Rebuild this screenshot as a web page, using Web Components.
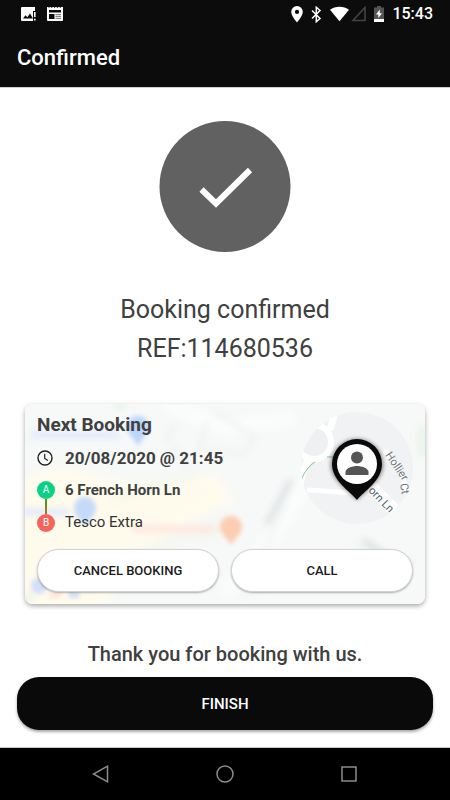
<!DOCTYPE html>
<html lang="en">
<head>
<meta charset="utf-8">
<meta name="viewport" content="width=device-width, initial-scale=1">
<title>Confirmed</title>
<style>
  body { margin: 0; font-family: Roboto, "Liberation Sans", sans-serif; color: #404040; background: #fff; }
</style>
</head>
<body>
<booking-screen></booking-screen>

<template id="t-screen">
  <style>
    :host { display: flex; flex-direction: column; min-height: 100vh; }
    main { flex: 1; display: flex; flex-direction: column; padding: 33px 17px 17px; border-top: 1px solid #cfcfcf; border-bottom: 1px solid #c4c8c6; }
    confirm-mark { align-self: center; }
    .ref { margin: 37px 0 0; font-size: 25px; line-height: 39px; text-align: center; font-weight: 400; }
    booking-card { margin: 36px 8px 0; }
    .thanks { margin: 38px 0 11px; font-size: 20px; line-height: 24px; font-weight: 500; text-align: center; }
  </style>
  <status-bar></status-bar>
  <title-bar>Confirmed</title-bar>
  <main>
    <confirm-mark></confirm-mark>
    <p class="ref">Booking confirmed<br>REF:114680536</p>
    <booking-card>
      <span slot="title">Next Booking</span>
      <span slot="date">20/08/2020 @ 21:45</span>
      <route-stops slot="route">
        <span slot="from">6 French Horn Ln</span>
        <span slot="to">Tesco Extra</span>
      </route-stops>
      <pill-button slot="actions">CANCEL BOOKING</pill-button>
      <pill-button slot="actions">CALL</pill-button>
    </booking-card>
    <p class="thanks">Thank you for booking with us.</p>
    <pill-button kind="primary">FINISH</pill-button>
  </main>
  <nav-bar></nav-bar>
</template>

<template id="t-status">
  <style>
    :host { display: flex; justify-content: space-between; align-items: center; height: 28px; padding: 0 17px 0 20px; background: #0c0c0c; color: #fff; font-size: 16px; font-weight: 500; line-height: 28px; }
    div { display: flex; align-items: center; }
    .left { gap: 10px; }
    .right { gap: 8px; }
    svg { display: block; }
  </style>
  <div class="left">
    <svg width="17" height="16" viewBox="0 0 17 16" aria-hidden="true">
      <path fill="#fff" d="M2 1h13v6h-1v8H2a1 1 0 0 1-1-1V2a1 1 0 0 1 1-1z"/>
      <path fill="#0c0c0c" d="M3 12.500l2.500-3.300 1.800 2 2.700-3.600 3 4.900z"/>
      <path fill="#0c0c0c" d="M13 5h3v11h-3z"/>
      <path fill="#fff" d="M14 6h1.600v5H14zM14 12.800h1.600v1.700H14z"/>
    </svg>
    <svg width="16" height="16" viewBox="0 0 16 16" aria-hidden="true">
      <path fill="#fff" d="M0 1h1.300l.7 1 .9-1h1l.9 1 .9-1h1l.9 1 .9-1h1l.9 1 .9-1h1l.9 1 .9-1H16v13a1 1 0 0 1-1 1H1a1 1 0 0 1-1-1z"/>
      <path fill="#0c0c0c" d="M2 4h12v2.500H2zM2 8h5.500v5H2z"/>
      <path fill="#888" d="M8.500 8H14v1.300H8.500zM8.500 10H14v1.200H8.500zM8.500 12H14v1H8.500z"/>
    </svg>
  </div>
  <div class="right">
    <svg width="12" height="17" viewBox="0 0 12 17" aria-hidden="true"><path fill="#fff" fill-rule="evenodd" d="M6 0a5.800 5.800 0 0 1 5.800 5.800C11.800 10 6 16.500 6 16.500S.2 10 .2 5.800A5.800 5.800 0 0 1 6 0zm0 3.800a2.100 2.100 0 1 0 0 4.200 2.100 2.100 0 0 0 0-4.200z"/></svg>
    <svg width="11" height="17" viewBox="0 0 11 17" aria-hidden="true"><path fill="none" stroke="#fff" stroke-width="1.500" d="M1 4.500l8 8-3.700 3.200V1.300L9 4.500l-8 8"/></svg>
    <div>
      <svg width="19" height="16" viewBox="0 0 19 16" aria-hidden="true"><path fill="#fff" d="M9.500 15.300L0 3.800C5-.4 14-.4 19 3.800z"/></svg>
      <svg width="17" height="16" viewBox="0 0 17 16" aria-hidden="true"><path fill="none" stroke="#444" stroke-width="1.600" d="M16 1.500v13H4z"/></svg>
    </div>
    <svg width="10" height="16" viewBox="0 0 10 16" aria-hidden="true">
      <path fill="#555" d="M3 0h4v1.500h3V16H0V1.500h3z"/>
      <path fill="#fff" d="M0 13h10v3H0zM5.800 3.500v3.700h2.300L4.300 12V8.500H2z"/>
    </svg>
    <span>15:43</span>
  </div>
</template>

<template id="t-title">
  <style>
    :host { display: block; background: #0c0c0c; color: #fff; padding: 0 17px; }
    h1 { margin: 0; font-size: 22px; line-height: 59px; font-weight: 500; }
  </style>
  <h1><slot></slot></h1>
</template>

<template id="t-mark">
  <style>
    :host { display: block; }
    svg { display: block; }
  </style>
  <svg width="132" height="132" viewBox="0 0 132 132" role="img" aria-label="Confirmed">
    <circle cx="66" cy="65.500" r="65.500" fill="#616161"/>
    <path d="M42.500 68.500L57 82.500 91 49" fill="none" stroke="#fff" stroke-width="6"/>
  </svg>
</template>

<template id="t-card">
  <style>
    :host { display: block; position: relative; border-radius: 8px; overflow: hidden; box-shadow: 0 2px 5px rgba(0,0,0,.35); color: #404040; }
    map-backdrop { position: absolute; inset: 0; }
    .body { position: relative; padding: 9px 12px 12px; }
    h2 { margin: 0 0 5px; font-size: 19px; line-height: 24px; font-weight: 700; }
    .date { display: flex; align-items: center; gap: 11px; height: 32px; font-size: 17px; font-weight: 700; line-height: 24px; }
    .date svg { display: block; }
    .actions { display: grid; grid-template-columns: 1fr 1fr; gap: 12px; margin-top: 11px; }
  </style>
  <map-backdrop></map-backdrop>
  <div class="body">
    <h2><slot name="title"></slot></h2>
    <div class="date">
      <svg width="17" height="16" viewBox="0 0 17 16" aria-hidden="true"><circle cx="8" cy="8" r="7" fill="none" stroke="#222" stroke-width="1.400"/><path d="M7.700 3.800v4.600l3.300 2" fill="none" stroke="#222" stroke-width="1.200"/></svg>
      <slot name="date"></slot>
    </div>
    <slot name="route"></slot>
    <div class="actions"><slot name="actions"></slot></div>
  </div>
</template>

<template id="t-route">
  <style>
    :host { display: flex; gap: 10px; line-height: 32px; font-size: 15px; }
    .marks { display: flex; flex-direction: column; align-items: center; padding: 7px 0 6px; }
    .dot { width: 18px; height: 18px; border-radius: 50%; color: #fff; font-size: 10px; line-height: 18px; text-align: center; }
    .a { background: #0bd088; }
    .b { background: #f4645a; }
    .line { flex: 1; width: 2px; background: linear-gradient(#4a9d12, #b0701c); }
    .from { font-weight: 700; }
    .to { color: #333; }
  </style>
  <div class="marks"><span class="dot a">A</span><span class="line"></span><span class="dot b">B</span></div>
  <div>
    <div class="from"><slot name="from"></slot></div>
    <div class="to"><slot name="to"></slot></div>
  </div>
</template>

<template id="t-pill">
  <style>
    :host { display: block; }
    button { display: block; width: 100%; height: 43px; padding: 0 12px; border: 1px solid #d2d2d2; border-radius: 22px; background: #fff; color: #1c1c1c; font: 500 13px Roboto, "Liberation Sans", sans-serif; box-shadow: 0 1px 2px rgba(0,0,0,.3); }
    :host([kind="primary"]) button { height: 53px; border: 0; background: #0a0a0a; color: #fff; font-size: 15px; box-shadow: 0 2px 3px rgba(0,0,0,.35); }
  </style>
  <button type="button"><slot></slot></button>
</template>

<template id="t-map">
  <style>
    :host { display: block; }
    svg { display: block; width: 100%; height: 100%; }
  </style>
  <svg viewBox="0 0 400 200" preserveAspectRatio="xMaxYMid slice" role="img" aria-label="Map of the pick-up point">
    <defs>
      <filter id="soft" x="-30%" y="-30%" width="160%" height="160%" color-interpolation-filters="sRGB"><feGaussianBlur stdDeviation="6"/></filter>
      <filter id="mid" filterUnits="userSpaceOnUse" x="-20" y="-20" width="440" height="240" color-interpolation-filters="sRGB"><feGaussianBlur stdDeviation="3"/></filter>
      <filter id="pins" filterUnits="userSpaceOnUse" x="-20" y="-20" width="440" height="240" color-interpolation-filters="sRGB"><feGaussianBlur stdDeviation="2"/></filter>
      <clipPath id="lens"><circle cx="332" cy="64" r="56"/></clipPath>
    </defs>
    <rect width="400" height="200" fill="#f7f9f8"/>
    <g filter="url(#soft)">
      <path fill="#fffbec" d="M-20 78l60-16 60 18 90-10 20 25-50 25-48 30-40 60H-20z"/>
      <path fill="none" stroke="#eff6ea" stroke-width="5" d="M85 96l90-26M55 185l60-38 95-27"/>
      <path fill="none" stroke="#fdfefe" stroke-width="10" d="M140 0l60 24 70-10M200 190l60-74 30-56"/>
    </g>
    <g filter="url(#mid)" fill="none">
      <path stroke="#edf1f1" stroke-width="3" d="M150 20l-8 14 20 28M190 8l40 26-12 16-44-6 8-26M220 190l40-90M330 140l60 18"/>
      <path stroke="#dfe2e5" stroke-width="6" d="M242 120l24-44M338 136l22 14"/>
      <path stroke="#e0eafa" stroke-width="7" d="M6 31h88M-2 108h46"/>
      <path stroke="#fde6de" stroke-width="7" d="M108 125h82"/>
      <path stroke="#e7f4e9" stroke-width="9" d="M398 22v30M90 0h10M0 194h8M230 182h10"/>
    </g>
    <g filter="url(#pins)">
      <path fill="#bcd5fb" d="M113 42c-4-8-11-12-11-19a11 11 0 0 1 22 0c0 7-7 11-11 19z"/>
      <path fill="#c5dafa" d="M60 122c-5-7-11-11-11-18a11 11 0 0 1 22 0c0 7-6 11-11 18z"/>
      <path fill="#fccdb2" d="M206 141c-5-8-11-12-11-18a11 11 0 0 1 22 0c0 6-6 10-11 18z"/>
      <circle cx="14" cy="182" r="8" fill="#d2dff9"/>
      <path stroke="#c6d8fa" stroke-width="5" d="M44 191h10"/>
      <path stroke="#fbdcd4" stroke-width="4" d="M24 191h12"/>
    </g>
    <g clip-path="url(#lens)">
      <rect x="270" y="0" width="130" height="130" fill="#f0f2f4"/>
      <path fill="none" stroke="#fff" stroke-width="7" d="M310 8l-5 18M274 86c2-15 6-25 12-35"/>
      <circle cx="289" cy="38" r="17" fill="#eef0f2" stroke="#fff" stroke-width="6"/>
      <path fill="none" stroke="#7cc592" stroke-width="1" d="M276 76c4-9 8-14 14-18M302 53h6"/>
      <path fill="none" stroke="#fff" stroke-width="5" stroke-linecap="round" d="M284 86l44 3"/>
      <path fill="none" stroke="#fff" stroke-width="12" d="M340 76l44 44"/>
      <path fill="none" stroke="#fff" stroke-width="5" stroke-linecap="round" d="M361 48c10 10 17 22 20 37"/>
    </g>
    <g font-family="Roboto, sans-serif" font-size="11" font-weight="400" fill="#71767b">
      <text transform="translate(360 51) rotate(56)">Hollier</text>
      <text transform="translate(375 80) rotate(80)">Ct</text>
      <text transform="translate(343 87) rotate(46)" fill="#4a626b" stroke="#fff" stroke-width="2" paint-order="stroke">orn Ln</text>
    </g>
    <path filter="url(#pins)" fill="#000" opacity=".5" d="M332 96c-8-9-26-20-26-35a26 26 0 0 1 52 0c0 15-18 26-26 35z"/>
    <path fill="#0a0a0a" d="M332 96c-7-9-25-19-25-36a25 25 0 0 1 50 0c0 17-18 27-25 36z"/>
    <circle cx="332" cy="60" r="20" fill="#fff"/>
    <circle cx="332" cy="53.500" r="6" fill="#555"/>
    <path fill="#555" d="M320.500 71v-3c0-4 7.500-6 11.500-6s11.500 2 11.500 6v3z"/>
  </svg>
</template>

<template id="t-nav">
  <style>
    :host { display: block; background: #000; }
    nav { display: grid; grid-template-columns: repeat(3, 124px); justify-content: center; height: 52px; }
    button { display: grid; place-items: center; padding: 0; border: 0; background: none; }
    svg { display: block; fill: none; stroke: #8c8c8c; stroke-width: 1.500; }
  </style>
  <nav aria-label="System">
    <button type="button" aria-label="Back"><svg width="18" height="18" viewBox="0 0 18 18"><path d="M15.500 1.200v15.600L1.500 9z"/></svg></button>
    <button type="button" aria-label="Home"><svg width="18" height="18" viewBox="0 0 18 18"><circle cx="9" cy="9" r="8"/></svg></button>
    <button type="button" aria-label="Recent apps"><svg width="18" height="18" viewBox="0 0 18 18"><rect x="2" y="2" width="14" height="14"/></svg></button>
  </nav>
</template>

<script>
  function cloneInto(host, id) {
    const root = host.attachShadow({ mode: 'open' });
    root.append(document.getElementById(id).content.cloneNode(true));
  }
  class StatusBar extends HTMLElement { constructor() { super(); cloneInto(this, 't-status'); } }
  class TitleBar extends HTMLElement { constructor() { super(); cloneInto(this, 't-title'); } }
  class ConfirmMark extends HTMLElement { constructor() { super(); cloneInto(this, 't-mark'); } }
  class MapBackdrop extends HTMLElement { constructor() { super(); cloneInto(this, 't-map'); } }
  class RouteStops extends HTMLElement { constructor() { super(); cloneInto(this, 't-route'); } }
  class PillButton extends HTMLElement { constructor() { super(); cloneInto(this, 't-pill'); } }
  class BookingCard extends HTMLElement { constructor() { super(); cloneInto(this, 't-card'); } }
  class NavBar extends HTMLElement { constructor() { super(); cloneInto(this, 't-nav'); } }
  class BookingScreen extends HTMLElement { constructor() { super(); cloneInto(this, 't-screen'); } }
  customElements.define('status-bar', StatusBar);
  customElements.define('title-bar', TitleBar);
  customElements.define('confirm-mark', ConfirmMark);
  customElements.define('map-backdrop', MapBackdrop);
  customElements.define('route-stops', RouteStops);
  customElements.define('pill-button', PillButton);
  customElements.define('booking-card', BookingCard);
  customElements.define('nav-bar', NavBar);
  customElements.define('booking-screen', BookingScreen);
</script>
</body>
</html>
